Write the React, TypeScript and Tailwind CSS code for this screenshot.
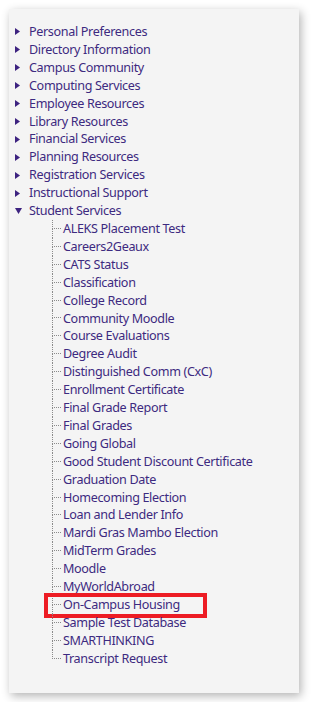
const topItems = [
  'Personal Preferences',
  'Directory Information',
  'Campus Community',
  'Computing Services',
  'Employee Resources',
  'Library Resources',
  'Financial Services',
  'Planning Resources',
  'Registration Services',
  'Instructional Support',
]

const studentServices = [
  'ALEKS Placement Test',
  'Careers2Geaux',
  'CATS Status',
  'Classification',
  'College Record',
  'Community Moodle',
  'Course Evaluations',
  'Degree Audit',
  'Distinguished Comm (CxC)',
  'Enrollment Certificate',
  'Final Grade Report',
  'Final Grades',
  'Going Global',
  'Good Student Discount Certificate',
  'Graduation Date',
  'Homecoming Election',
  'Loan and Lender Info',
  'Mardi Gras Mambo Election',
  'MidTerm Grades',
  'Moodle',
  'MyWorldAbroad',
  'On-Campus Housing',
  'Sample Test Database',
  'SMARTHINKING',
  'Transcript Request',
]

function Arrow({ open }: { open?: boolean }) {
  return (
    <span className="flex w-[14px] shrink-0 items-center">
      {open ? (
        <svg width="7" height="6" viewBox="0 0 7 6">
          <polygon points="0,0 7,0 3.5,6" fill="#3d2380" />
        </svg>
      ) : (
        <svg width="5" height="7" viewBox="0 0 5 7">
          <polygon points="0,0 5,3.5 0,7" fill="#3d2380" />
        </svg>
      )}
    </span>
  )
}

function ChildRow({ label, last, marked }: { label: string; last: boolean; marked: boolean }) {
  return (
    <li className="relative flex h-[17.92px] items-center">
      <div className="flex h-full w-[9px] shrink-0 flex-col">
        <div className="h-1/2 border-b border-l border-dotted border-[#8a8a8a]" />
        <div className={last ? 'h-1/2' : 'h-1/2 border-l border-dotted border-[#8a8a8a]'} />
      </div>
      <a className="ml-[2px] whitespace-nowrap">{label}</a>
      {marked && (
        <span className="pointer-events-none absolute left-[-8px] top-[-3px] h-[25px] w-[163px] border-[4px] border-[#ed1c24]" />
      )}
    </li>
  )
}

export default function App() {
  return (
    <div className="min-h-[702px] bg-white pl-[9px] pt-[9px]">
      <div
        className="h-[684px] w-[290px] bg-[#f4f4f4] pl-[6px] pt-[14px] text-[12.6px] leading-[17.92px] tracking-[-0.35px] text-[#3d2a80] shadow-[2px_3px_9px_rgba(0,0,0,0.3)]"
        style={{ fontFamily: '"Noto Sans", "Open Sans", sans-serif' }}
      >
        <ul>
          {topItems.map((t) => (
            <li key={t} className="flex h-[17.92px] items-center">
              <Arrow />
              <a className="whitespace-nowrap">{t}</a>
            </li>
          ))}
          <li>
            <div className="flex h-[17.92px] items-center">
              <Arrow open />
              <a className="whitespace-nowrap">Student Services</a>
            </div>
            <ul className="pl-[37px]">
              {studentServices.map((s, i) => (
                <ChildRow
                  key={s}
                  label={s}
                  last={i === studentServices.length - 1}
                  marked={s === 'On-Campus Housing'}
                />
              ))}
            </ul>
          </li>
        </ul>
      </div>
    </div>
  )
}
